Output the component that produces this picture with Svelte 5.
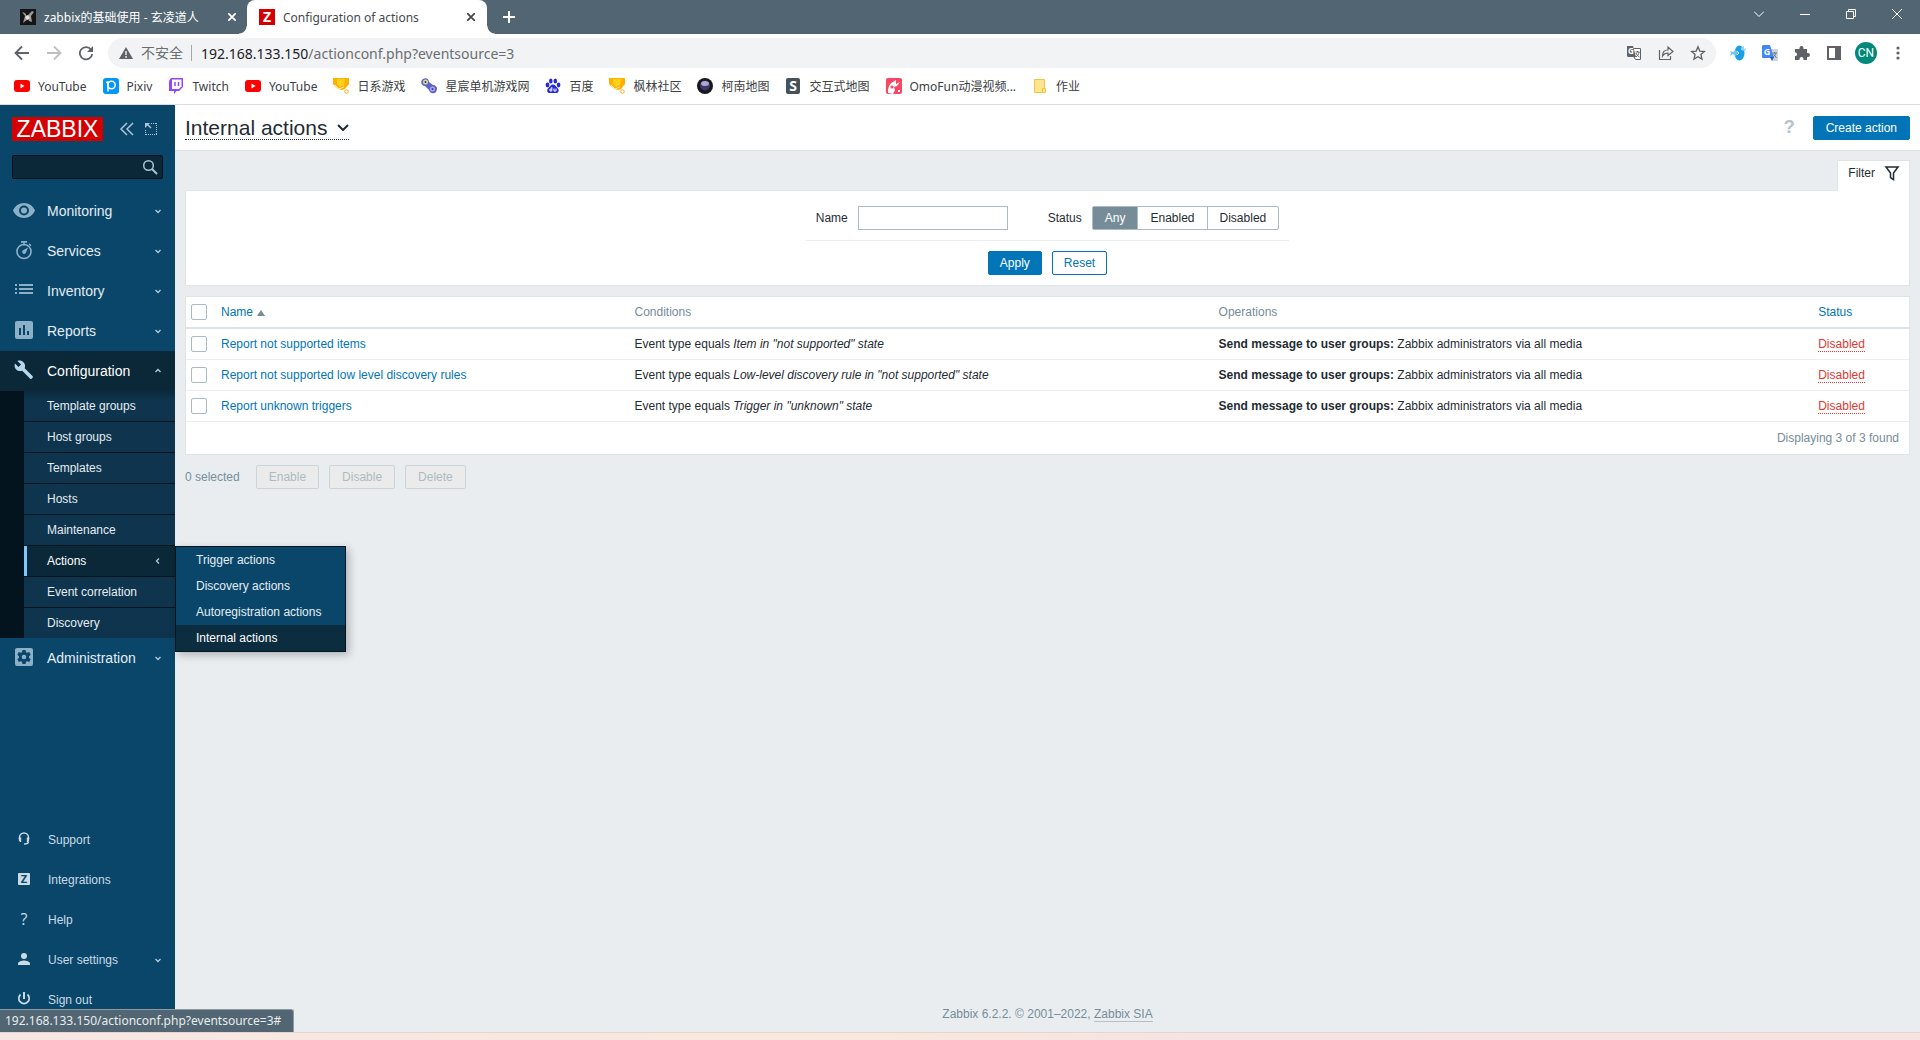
<script lang="ts">
	type Bookmark = { icon: string; label: string };
	type MenuItem = { icon: string; label: string };
	type ActionRow = { name: string; condition: string };

	const bookmarks: Bookmark[] = [
		{ icon: 'youtube', label: 'YouTube' },
		{ icon: 'pixiv', label: 'Pixiv' },
		{ icon: 'twitch', label: 'Twitch' },
		{ icon: 'youtube', label: 'YouTube' },
		{ icon: 'trophy', label: '日系游戏' },
		{ icon: 'gamepad', label: '星宸单机游戏网' },
		{ icon: 'paw', label: '百度' },
		{ icon: 'trophy', label: '枫林社区' },
		{ icon: 'orb', label: '柯南地图' },
		{ icon: 'smap', label: '交互式地图' },
		{ icon: 'omofun', label: 'OmoFun动漫视频...' },
		{ icon: 'folder', label: '作业' }
	];

	const topMenu: MenuItem[] = [
		{ icon: 'eye', label: 'Monitoring' },
		{ icon: 'watch', label: 'Services' },
		{ icon: 'list', label: 'Inventory' },
		{ icon: 'chart', label: 'Reports' },
		{ icon: 'wrench', label: 'Configuration' },
		{ icon: 'gear', label: 'Administration' }
	];

	const configItems = [
		'Template groups',
		'Host groups',
		'Templates',
		'Hosts',
		'Maintenance',
		'Actions',
		'Event correlation',
		'Discovery'
	];

	const actionItems = [
		'Trigger actions',
		'Discovery actions',
		'Autoregistration actions',
		'Internal actions'
	];

	const userMenu: MenuItem[] = [
		{ icon: 'headset', label: 'Support' },
		{ icon: 'zed', label: 'Integrations' },
		{ icon: 'help', label: 'Help' },
		{ icon: 'person', label: 'User settings' },
		{ icon: 'power', label: 'Sign out' }
	];

	const rows: ActionRow[] = [
		{ name: 'Report not supported items', condition: 'Item in "not supported" state' },
		{
			name: 'Report not supported low level discovery rules',
			condition: 'Low-level discovery rule in "not supported" state'
		},
		{ name: 'Report unknown triggers', condition: 'Trigger in "unknown" state' }
	];

	const statuses = ['Any', 'Enabled', 'Disabled'];

	let openSection = $state('Configuration');
	let search = $state('');
	let filterName = $state('');
	let filterStatus = $state('Any');
	let checked = $state([false, false, false]);

	let selectedCount = $derived(checked.filter(Boolean).length);

	function toggleSection(label: string) {
		openSection = openSection === label ? '' : label;
	}

	function toggleAll(event: Event) {
		const value = (event.target as HTMLInputElement).checked;
		checked = checked.map(() => value);
	}

	function resetFilter() {
		filterName = '';
		filterStatus = 'Any';
	}
</script>

{#snippet siteIcon(name: string)}
	<svg class="site-icon" width="16" height="16" viewBox="0 0 16 16" aria-hidden="true">
		{#if name === 'youtube'}
			<rect x="0" y="2" width="16" height="12" rx="3" fill="#f00" />
			<path d="M6.5 5.5v5l4-2.5z" fill="#fff" />
		{:else if name === 'pixiv'}
			<rect width="16" height="16" rx="3" fill="#0096fa" />
			<circle cx="8.5" cy="7" r="3.7" fill="none" stroke="#fff" stroke-width="1.5" />
			<path d="M3 4.5l2-.5v9.500" fill="none" stroke="#fff" stroke-width="1.5" />
		{:else if name === 'twitch'}
			<path d="M3 0h12v9l-4 4H8.500L6 16v-3H1V3z" fill="#9146ff" />
			<path d="M4 1.5h9.500v7L11 11H4z" fill="#fff" />
			<path d="M7 4v4M10.5 4v4" stroke="#9146ff" stroke-width="1.5" />
		{:else if name === 'trophy'}
			<path d="M0 0h16v6l-4 5-3 1-4-1-5-5z" fill="#ffb000" />
			<path d="M4 1h8l-1 6-4 2-3-3z" fill="#ffd21a" />
			<path d="M2 7l4 4 5-2" fill="none" stroke="#fff0c0" />
			<circle cx="13.5" cy="13.5" r="1.8" fill="#fff" stroke="#ffae1a" />
		{:else if name === 'gamepad'}
			<path d="M2 1c3-2 6 0 6 3l4 3c4 0 5 4 3 7-2 2-6 2-7-2L4 8C0 8-1 3 2 1z" fill="#5966c7" />
			<circle cx="4.5" cy="4" r="2.5" fill="#ded99a" />
			<circle cx="4.5" cy="4" r="1" fill="#36317e" />
			<circle cx="11.5" cy="11" r="2.5" fill="#b5a2e6" />
			<circle cx="11.5" cy="11" r="1" fill="#4b3290" />
		{:else if name === 'paw'}
			<g fill="#2529d8">
				<ellipse cx="2.5" cy="7" rx="1.9" ry="2.4" />
				<ellipse cx="5.8" cy="3" rx="1.8" ry="2.5" />
				<ellipse cx="10.3" cy="3" rx="1.8" ry="2.5" />
				<ellipse cx="13.6" cy="7" rx="1.8" ry="2.4" />
				<path d="M8 6.500c2 0 3 2 4.500 3.500C15 12.500 13 15.500 11 15H5c-2.500.5-4-3-1.500-5C5 8.500 6 6.500 8 6.500z" />
			</g>
			<path d="M6.800 9v4H5v-2h1.500M9 10.500V13h2v-2.500" fill="none" stroke="#fff" />
		{:else if name === 'orb'}
			<circle cx="8" cy="8" r="8" fill="#17171c" />
			<circle cx="8" cy="7.5" r="5" fill="#3c3968" />
			<ellipse cx="8" cy="5.500" rx="4" ry="2.5" fill="#aaa9d0" />
		{:else if name === 'smap'}
			<rect x="1" width="14" height="16" rx="2" fill="#46525a" />
			<text class="mark" x="8" y="13" font-size="14" fill="#fff">S</text>
		{:else if name === 'omofun'}
			<rect width="16" height="16" rx="2" fill="#fb4564" />
			<path d="M2 15c0-5 1-9 5-11l3-2v4l4-2-3 4-3 1 1 3-2 4zM11 4l3-2M12 12h2v2h-2z" fill="#fff" />
			<circle cx="6" cy="9" r="1.5" fill="#fb4564" />
		{:else if name === 'folder'}
			<path d="M2.500 1.500h10v9h1v4h-11z" fill="#ffe591" stroke="#f0c83c" />
			<path d="M10.500 14v-3.500h2" fill="none" stroke="#f0c83c" />
		{:else if name === 'avatar'}
			<rect width="16" height="16" fill="#151515" />
			<path d="M2 3l3 1 2 3 5-5 2 1-3 4 1 6-3-1-1-2-5 4 2-7z" fill="#9a9a9a" />
			<path d="M5 8l3-2 2 3-3 2z" fill="#e4e4e4" />
		{:else if name === 'zabbix'}
			<rect width="16" height="16" fill="#d40000" />
			<text class="mark" x="8" y="13" font-size="14" fill="#fff">Z</text>
		{/if}
	</svg>
{/snippet}

{#snippet menuIcon(name: string)}
	<svg class="menu-icon" width="24" height="24" viewBox="0 0 24 24" fill="currentColor" aria-hidden="true">
		{#if name === 'eye'}
			<path fill-rule="evenodd" d="M12 4C7 4 2.700 7.100 1 11.500 2.700 15.900 7 19 12 19s9.300-3.100 11-7.500C21.300 7.100 17 4 12 4zm0 12.500a5 5 0 1 1 0-10 5 5 0 0 1 0 10zm0-8a3 3 0 1 0 0 6 3 3 0 0 0 0-6z" />
		{:else if name === 'watch'}
			<circle cx="12" cy="12.5" r="7" fill="none" stroke="currentColor" stroke-width="1.600" />
			<path d="M9 2h6v1.700H9zM11.300 3.500h1.400v3h-1.400zM17.500 4.500l2 1.800-1 1-2-1.700zM16 8.500L13.800 14a2 2 0 1 1-3.200-2.400z" />
		{:else if name === 'list'}
			<path d="M3 5h2v2H3zM3 9h2v2H3zM3 13h2v2H3zM7 5h14v2H7zM7 9h14v2H7zM7 13h14v2H7z" />
		{:else if name === 'chart'}
			<path fill-rule="evenodd" d="M5 2h14a2 2 0 0 1 2 2v14a2 2 0 0 1-2 2H5a2 2 0 0 1-2-2V4c0-1.100.9-2 2-2zm2 7v7h2V9zm4-3v10h2V6zm4 6v4h2v-4z" />
		{:else if name === 'wrench'}
			<path d="M20.700 17.200l-8-8c.8-2 .4-4.400-1.300-6-1.500-1.500-4-2-6-1.200L9 5.500 6.500 8 3 4.500C2.200 6.500 2.600 9 4.200 10.500c1.600 1.600 4 2 6 1.200l8 8c.4.400 1 .4 1.400 0l1.100-1.100c.4-.4.4-1 0-1.400z" />
		{:else if name === 'gear'}
			<path fill-rule="evenodd" d="M5 2h14a2 2 0 0 1 2 2v14a2 2 0 0 1-2 2H5a2 2 0 0 1-2-2V4c0-1.100.9-2 2-2zm5.500 2L10 6.200l-1 .6-2.200-.7-1.500 2.600L7 10.200v1.600l-1.700 1.500 1.500 2.600 2.200-.7 1 .6.5 2.200h3l.5-2.200 1-.6 2.200.7 1.500-2.600-1.700-1.500v-1.600l1.700-1.500-1.500-2.600-2.200.7-1-.6-.5-2.200zM12 8.700a2.300 2.300 0 1 1 0 4.600 2.300 2.300 0 0 1 0-4.600z" />
		{:else if name === 'headset'}
			<path d="M7.500 11V9.500a4.500 4.500 0 0 1 9 0V11" fill="none" stroke="currentColor" stroke-width="1.500" />
			<path d="M6.800 9.500h2.400V14H8l-1.200-1.500zM14.800 9.500h2.400v3L16 14h-1.200z" />
			<path d="M16.500 13.500c0 2-1.500 2.500-4.500 2.500" fill="none" stroke="currentColor" stroke-width="1.500" />
		{:else if name === 'zed'}
			<rect x="6" y="5" width="12" height="12" rx="1" />
			<text class="mark" x="12" y="15" font-size="11" fill="#0a466a">Z</text>
		{:else if name === 'help'}
			<text class="mark thin" x="12" y="17" font-size="16">?</text>
		{:else if name === 'person'}
			<circle cx="12" cy="8" r="3" />
			<path d="M6 17v-1.500c0-2 4-3 6-3s6 1 6 3V17z" />
		{:else if name === 'power'}
			<path d="M8.500 6.500a5.200 5.200 0 1 0 7 0" fill="none" stroke="currentColor" stroke-width="1.700" />
			<rect x="11" y="4" width="2" height="7" />
		{/if}
	</svg>
{/snippet}

{#snippet chevron(direction: string)}
	<svg class="chevron {direction}" width="8" height="8" viewBox="0 0 8 8" aria-hidden="true">
		<path d="M1.500 3L4 5.500 6.500 3" fill="none" stroke="currentColor" stroke-width="1.300" />
	</svg>
{/snippet}

<div class="screen">
	<div class="tab-strip">
		<div class="tab">
			{@render siteIcon('avatar')}
			<span class="tab-title">zabbix的基础使用 - 玄凌道人</span>
			<button class="tab-close" type="button" aria-label="Close tab">
				<svg width="8" height="8" viewBox="0 0 8 8"><path d="M0 0l8 8M8 0L0 8" stroke="currentColor" stroke-width="1.800" /></svg>
			</button>
		</div>
		<div class="tab active">
			{@render siteIcon('zabbix')}
			<span class="tab-title">Configuration of actions</span>
			<button class="tab-close" type="button" aria-label="Close tab">
				<svg width="8" height="8" viewBox="0 0 8 8"><path d="M0 0l8 8M8 0L0 8" stroke="currentColor" stroke-width="1.800" /></svg>
			</button>
		</div>
		<button class="new-tab" type="button" aria-label="New tab">
			<svg width="12" height="12" viewBox="0 0 12 12"><path d="M6 0v12M0 6h12" stroke="currentColor" stroke-width="2" /></svg>
		</button>
		<div class="window-buttons">
			<button type="button" aria-label="Search tabs">
				<svg width="10" height="10" viewBox="0 0 10 10"><path d="M0 2.500l5 5 5-5" /></svg>
			</button>
			<button type="button" aria-label="Minimize">
				<svg width="10" height="10" viewBox="0 0 10 10"><path d="M0 5.500h10" /></svg>
			</button>
			<button type="button" aria-label="Restore">
				<svg width="10" height="10" viewBox="0 0 10 10"><path d="M.5 2.500h7v7h-7zM2.500 2V.5h7v7H8" /></svg>
			</button>
			<button type="button" aria-label="Close window">
				<svg width="10" height="10" viewBox="0 0 10 10"><path d="M0 0l10 10M10 0L0 10" /></svg>
			</button>
		</div>
	</div>

	<div class="toolbar">
		<div class="nav-buttons">
			<button type="button" aria-label="Back">
				<svg width="16" height="16" viewBox="0 0 16 16"><path d="M15 8H2M8 1.500L1.500 8 8 14.500" fill="none" stroke="#5f6368" stroke-width="1.800" /></svg>
			</button>
			<button type="button" aria-label="Forward">
				<svg width="16" height="16" viewBox="0 0 16 16"><path d="M1 8h13M8 1.500L14.500 8 8 14.500" fill="none" stroke="#bdbfc1" stroke-width="1.800" /></svg>
			</button>
			<button type="button" aria-label="Reload">
				<svg width="16" height="16" viewBox="0 0 16 16"><path d="M13 4.500A6.200 6.200 0 1 0 14.200 9" fill="none" stroke="#5f6368" stroke-width="1.800" /><path d="M15 1v6H9z" fill="#5f6368" /></svg>
			</button>
		</div>
		<div class="address">
			<svg width="14" height="14" viewBox="0 0 14 14" aria-hidden="true"><path d="M7 1l7 12H0z" fill="#5f6368" /><path d="M7 5v4M7 10v2" stroke="#f1f3f4" stroke-width="1.400" /></svg>
			<span class="insecure">不安全</span>
			<span class="url"><b>192.168.133.150</b>/actionconf.php?eventsource=3</span>
			<div class="address-icons">
				<button type="button" aria-label="Translate this page">
					<svg width="16" height="16" viewBox="0 0 16 16"><path d="M7.500 3.500h7v11H9.500L8 12" fill="#fff" stroke="#5f6368" /><path d="M1 1h6l3 11H2.500A1.500 1.500 0 0 1 1 10.500z" fill="#5f6368" /><text class="mark" x="4.800" y="9" font-size="8" fill="#fff">G</text><path d="M9.500 7h4M11.500 6v1M13 7c0 2-1.500 4-3 5M10 8c.5 2 2 3 3.500 4" fill="none" stroke="#5f6368" /></svg>
				</button>
				<button type="button" aria-label="Share">
					<svg width="16" height="16" viewBox="0 0 16 16"><path d="M1.500 5v9.500h11V11M4.500 11c0-4 2-6 5.500-6V2l5 4.500-5 4V8c-2.500 0-4 .5-5.500 3z" fill="none" stroke="#5f6368" stroke-width="1.200" /></svg>
				</button>
				<button type="button" aria-label="Bookmark this tab">
					<svg width="16" height="16" viewBox="0 0 16 16"><path d="M8 1.800l1.800 4.300 4.600.4-3.500 3 1.100 4.600L8 11.700l-4 2.400 1.100-4.600-3.500-3 4.600-.4z" fill="none" stroke="#5f6368" stroke-width="1.300" /></svg>
				</button>
			</div>
		</div>
		<div class="extensions">
			<button type="button" aria-label="Fish extension">
				<svg width="16" height="16" viewBox="0 0 16 16"><ellipse cx="9.500" cy="8" rx="5" ry="7.500" fill="#1b9fe8" /><path d="M0 6l3 1 3-2 2 3-2 3-3-2-3 2 1-3z" fill="#70c6f2" /><path d="M7 6l2 2-2 2" fill="none" stroke="#d8f1fd" /><path d="M11 1l1 2 2-2v3l2-1-1 3-4-1z" fill="#8ed6f7" /></svg>
			</button>
			<button type="button" aria-label="Google Translate">
				<svg width="16" height="16" viewBox="0 0 16 16"><path d="M6 4h10v12H10z" fill="#d2d5da" /><path d="M1 0h7l4 13H1a1 1 0 0 1-1-1V1z" fill="#4285f4" /><path d="M8 12h4l-2 4z" fill="#2457c5" /><text class="mark" x="5" y="10" font-size="9" fill="#fff">G</text><path d="M10.500 8H15M12.500 7v1M14 8c-.5 2-1.500 3-3 4M11.500 9l3 4" fill="none" stroke="#607d8b" /></svg>
			</button>
			<button type="button" aria-label="Extensions">
				<svg width="16" height="16" viewBox="0 0 16 16"><path d="M1 4h4.500V3a2 2 0 0 1 4 0v1H13v4h1a2 2 0 0 1 0 4h-1v3H9.500v-1a2 2 0 0 0-4 0v1H1v-4h1a2 2 0 0 0 0-3.500H1z" fill="#5f6368" /></svg>
			</button>
			<button type="button" aria-label="Side panel">
				<svg width="16" height="16" viewBox="0 0 16 16"><path fill-rule="evenodd" d="M1 1h14v14H1zm2 2v10h6V3z" fill="#5f6368" /></svg>
			</button>
			<button class="profile" type="button" aria-label="Profile">CN</button>
			<button type="button" aria-label="Menu">
				<svg width="16" height="16" viewBox="0 0 16 16" fill="#5f6368"><circle cx="8" cy="3" r="1.600" /><circle cx="8" cy="8" r="1.600" /><circle cx="8" cy="13" r="1.600" /></svg>
			</button>
		</div>
	</div>

	<nav class="bookmarks" aria-label="Bookmarks">
		{#each bookmarks as bookmark}
			<a href="#bookmark">{@render siteIcon(bookmark.icon)}<span>{bookmark.label}</span></a>
		{/each}
	</nav>

	<div class="page">
		<aside class="sidebar">
			<div class="brand">
				<a class="logo" href="#dashboard">ZABBIX</a>
				<button type="button" aria-label="Collapse sidebar">
					<svg width="16" height="16" viewBox="0 0 16 16"><path d="M8 2L2 8l6 6M14 2L8 8l6 6" fill="none" stroke="currentColor" stroke-width="1.500" /></svg>
				</button>
				<button type="button" aria-label="Hide sidebar">
					<svg width="16" height="16" viewBox="0 0 16 16"><path d="M8 2.500h6M13.500 2v12M14 13.500H2M2.500 14V8" fill="none" stroke="currentColor" stroke-dasharray="1 1" /><path d="M2 2h5L5.500 3.500l3 3-1 1-3-3L2 7z" fill="currentColor" /></svg>
				</button>
			</div>

			<form class="search" role="search" onsubmit={(event) => event.preventDefault()}>
				<input type="text" aria-label="Search" bind:value={search} />
				<button type="submit" aria-label="Search">
					<svg width="16" height="16" viewBox="0 0 16 16"><circle cx="6.500" cy="6.500" r="4.800" fill="none" stroke="currentColor" stroke-width="1.500" /><path d="M10 10l5 5" stroke="currentColor" stroke-width="2" /></svg>
				</button>
			</form>

			<nav class="menu" aria-label="Main navigation">
				{#each topMenu as item}
					{@const open = openSection === item.label}
					<button class="menu-item" class:open type="button" aria-expanded={open} onclick={() => toggleSection(item.label)}>
						{@render menuIcon(item.icon)}
						<span>{item.label}</span>
						{@render chevron(open ? 'up' : 'down')}
					</button>
					{#if open && item.label === 'Configuration'}
						<ul class="submenu">
							{#each configItems as label}
								<li class:selected={label === 'Actions'}>
									<a href="#config">{label}</a>
									{#if label === 'Actions'}
										{@render chevron('left')}
										<ul class="flyout">
											{#each actionItems as action}
												<li><a class:current={action === 'Internal actions'} href="#actions">{action}</a></li>
											{/each}
										</ul>
									{/if}
								</li>
							{/each}
						</ul>
					{/if}
				{/each}
			</nav>

			<nav class="user-menu" aria-label="User navigation">
				{#each userMenu as item}
					<a href="#user">
						{@render menuIcon(item.icon)}
						<span>{item.label}</span>
						{#if item.label === 'User settings'}
							{@render chevron('down')}
						{/if}
					</a>
				{/each}
			</nav>
		</aside>

		<main>
			<header class="page-header">
				<h1>
					<button type="button">
						Internal actions
						<svg width="12" height="8" viewBox="0 0 12 8" aria-hidden="true"><path d="M1 2l5 5 5-5" fill="none" stroke="currentColor" stroke-width="2" /></svg>
					</button>
				</h1>
				<a class="page-help" href="#help" aria-label="Help">?</a>
				<button class="btn" type="button">Create action</button>
			</header>

			<div class="content">
				<div class="filter-tab">
					<button type="button">
						Filter
						<svg width="16" height="16" viewBox="0 0 16 16" aria-hidden="true"><path d="M2 2h12l-4.500 6v6.500l-3-2V8z" fill="none" stroke="currentColor" stroke-width="1.500" /></svg>
					</button>
				</div>

				<form class="filter" onsubmit={(event) => event.preventDefault()}>
					<div class="filter-fields">
						<label for="filter-name">Name</label>
						<input id="filter-name" type="text" bind:value={filterName} />
						<span id="status-label">Status</span>
						<div class="segmented" role="radiogroup" aria-labelledby="status-label">
							{#each statuses as status}
								<label>
									<input type="radio" name="status" value={status} bind:group={filterStatus} />
									<span>{status}</span>
								</label>
							{/each}
						</div>
					</div>
					<div class="filter-actions">
						<button class="btn" type="submit">Apply</button>
						<button class="btn alt" type="button" onclick={resetFilter}>Reset</button>
					</div>
				</form>

				<table>
					<thead>
						<tr>
							<th class="check"><input type="checkbox" aria-label="Select all" onchange={toggleAll} /></th>
							<th class="name"><a href="#sort">Name<span class="sort-arrow"></span></a></th>
							<th class="conditions">Conditions</th>
							<th class="operations">Operations</th>
							<th><a href="#sort">Status</a></th>
						</tr>
					</thead>
					<tbody>
						{#each rows as row, i}
							<tr>
								<td><input type="checkbox" aria-label={row.name} bind:checked={checked[i]} /></td>
								<td><a href="#edit">{row.name}</a></td>
								<td>Event type equals <em>{row.condition}</em></td>
								<td><b>Send message to user groups:</b> Zabbix administrators via all media</td>
								<td><a class="disabled" href="#enable">Disabled</a></td>
							</tr>
						{/each}
					</tbody>
					<tfoot>
						<tr><td colspan="5">Displaying 3 of 3 found</td></tr>
					</tfoot>
				</table>

				<div class="bulk">
					<span>{selectedCount} selected</span>
					<button type="button" disabled={selectedCount === 0}>Enable</button>
					<button type="button" disabled={selectedCount === 0}>Disable</button>
					<button type="button" disabled={selectedCount === 0}>Delete</button>
				</div>
			</div>

			<footer>Zabbix 6.2.2. © 2001–2022, <a href="#zabbix">Zabbix SIA</a></footer>
		</main>

		<div class="link-status">192.168.133.150/actionconf.php?eventsource=3#</div>
	</div>

	<div class="desktop-edge"></div>
</div>

<style>
	:global(body) {
		margin: 0;
	}

	.screen {
		--chrome: #516672;
		--blue: #0275b8;
		--line: #dfe4e7;
		min-height: 100vh;
		display: flex;
		flex-direction: column;
		font-family: 'Liberation Sans', Arial, sans-serif;
		font-size: 12px;
		color: #1f2c33;
		background: #fff;
	}

	.screen *,
	.screen *::before,
	.screen *::after {
		box-sizing: border-box;
	}

	button {
		font: inherit;
		color: inherit;
		background: none;
		border: 0;
		padding: 0;
		cursor: pointer;
	}

	a {
		text-decoration: none;
		color: var(--blue);
	}

	svg {
		display: block;
		flex: none;
	}

	.mark {
		font-family: 'Open Sans', sans-serif;
		font-weight: 700;
		text-anchor: middle;
	}

	.mark.thin {
		font-weight: 400;
	}

	ul {
		list-style: none;
		margin: 0;
		padding: 0;
	}

	/* Browser window */
	.tab-strip,
	.toolbar,
	.bookmarks,
	.link-status {
		font-family: 'Noto Sans', 'Noto Sans CJK SC', sans-serif;
	}

	.tab-strip {
		display: flex;
		height: 34px;
		background: var(--chrome);
		color: #fff;
	}

	.tab {
		position: relative;
		display: flex;
		align-items: center;
		gap: 8px;
		width: 247px;
		padding: 0 11px 6px 20px;
		padding-bottom: 0;
		white-space: nowrap;
	}

	.tab.active {
		width: 240px;
		padding: 0 12px;
		border-radius: 8px 8px 0 0;
		background: #fff;
		color: #45494d;
	}

	/* Flared feet of the active tab */
	.tab.active::before,
	.tab.active::after {
		content: '';
		position: absolute;
		bottom: 0;
		width: 8px;
		height: 8px;
	}

	.tab.active::before {
		right: 100%;
		background: radial-gradient(circle at 0 0, var(--chrome) 7px, #fff 8px);
	}

	.tab.active::after {
		left: 100%;
		background: radial-gradient(circle at 100% 0, var(--chrome) 7px, #fff 8px);
	}

	.tab-title {
		flex: 1;
	}

	.new-tab {
		padding: 0 16px;
	}

	.window-buttons {
		display: flex;
		margin-left: auto;
	}

	.window-buttons button {
		display: grid;
		place-items: center;
		width: 46px;
		height: 28px;
	}

	.window-buttons path {
		fill: none;
		stroke: #fff;
	}

	.toolbar {
		display: flex;
		align-items: center;
		height: 38px;
		padding-left: 14px;
	}

	.nav-buttons {
		display: flex;
		gap: 16px;
		width: 94px;
	}

	.address {
		display: flex;
		align-items: center;
		flex: 1;
		height: 30px;
		padding: 0 10px 0 11px;
		border-radius: 15px;
		background: #f1f3f4;
		font-size: 14px;
		color: #6b6f73;
	}

	.insecure {
		margin-left: 8px;
		padding-right: 8px;
		border-right: 1px solid #a5a8ab;
		line-height: 16px;
	}

	.url {
		flex: 1;
		margin-left: 9px;
	}

	.url b {
		font-weight: 400;
		color: #202124;
	}

	.address-icons {
		display: flex;
		gap: 16px;
	}

	.extensions {
		display: flex;
		align-items: center;
		gap: 16px;
		padding: 0 14px;
	}

	.profile {
		width: 22px;
		height: 22px;
		margin: 0 -3px;
		border-radius: 50%;
		background: #00897b;
		color: #fff;
		font: 12px Roboto, sans-serif;
	}

	.bookmarks {
		display: flex;
		gap: 16px;
		height: 33px;
		padding: 0 14px;
		border-bottom: 1px solid #dadcde;
	}

	.bookmarks a {
		display: flex;
		align-items: center;
		gap: 8px;
		padding-bottom: 4px;
		color: #3c4043;
		white-space: nowrap;
	}

	/* Sidebar */
	.page {
		position: relative;
		flex: 1;
		display: flex;
		background: #e9edf0;
	}

	.sidebar {
		display: flex;
		flex-direction: column;
		flex: none;
		width: 175px;
		background: #0a466a;
		color: #e3edf3;
	}

	.brand {
		display: flex;
		align-items: center;
		padding: 12px 12px 0;
		color: #a9c5d7;
	}

	.logo {
		width: 91px;
		background: #d40000;
		color: #fff;
		font-size: 23px;
		line-height: 24px;
		text-align: center;
	}

	.brand button:first-of-type {
		margin: 0 8px 0 16px;
	}

	.search {
		display: flex;
		align-items: center;
		height: 24px;
		margin: 14px 12px 12px;
		border: 1px solid #05111a;
		border-radius: 2px;
		background: #0a2838;
		color: #a9c5d7;
	}

	.search input {
		flex: 1;
		min-width: 0;
		padding: 0 4px;
		border: 0;
		background: none;
		color: #fff;
		font: inherit;
	}

	.search button {
		padding: 0 4px;
	}

	.menu-item {
		display: flex;
		align-items: center;
		width: 100%;
		height: 40px;
		padding: 0 13px 0 12px;
		font-size: 14px;
		text-align: left;
	}

	.menu-item span {
		flex: 1;
		margin-left: 11px;
	}

	.menu-item .menu-icon {
		color: #8cb0c8;
	}

	.menu-item.open {
		background: #0a2838;
		color: #fff;
	}

	.menu-item.open .menu-icon {
		color: #b5d8ee;
	}

	.chevron {
		color: #b5cbd9;
	}

	.chevron.up {
		transform: rotate(180deg);
	}

	.chevron.left {
		transform: rotate(90deg);
	}

	.submenu {
		border-left: 24px solid #04141e;
		background: #0f344d;
	}

	.submenu > li {
		position: relative;
		display: flex;
		align-items: center;
		height: 31px;
		padding-right: 13px;
		border-bottom: 1px solid #05151f;
	}

	.submenu > li:first-child {
		background: linear-gradient(#0b293c, #0f344d 8px);
	}

	.submenu > li:last-child {
		height: 30px;
		border-bottom: 0;
	}

	.submenu > li > a {
		flex: 1;
		padding-left: 23px;
		color: #e3edf3;
	}

	.submenu > li.selected {
		background: #0a2838;
	}

	.submenu > li.selected > a {
		padding-left: 20px;
		border-left: 3px solid #7dc8ff;
		line-height: 30px;
		color: #fff;
	}

	.flyout {
		position: absolute;
		z-index: 2;
		top: 0;
		left: 100%;
		width: 171px;
		border: 1px solid #05151f;
		background: #0a466a;
		box-shadow: 3px 3px 8px rgba(0, 0, 0, 0.25);
	}

	.flyout a {
		display: block;
		padding: 0 20px;
		line-height: 26px;
		color: #e3edf3;
		white-space: nowrap;
	}

	.flyout a.current {
		background: #0c2c40;
		color: #fff;
	}

	.user-menu {
		margin-top: auto;
		padding-bottom: 12px;
	}

	.user-menu a {
		display: flex;
		align-items: center;
		height: 40px;
		padding: 0 13px 0 12px;
		color: #c9dbe6;
	}

	.user-menu span {
		flex: 1;
		margin-left: 12px;
	}

	/* Content */
	main {
		display: flex;
		flex-direction: column;
		flex: 1;
		min-width: 0;
	}

	.page-header {
		display: flex;
		align-items: center;
		height: 46px;
		padding: 0 10px;
		border-bottom: 1px solid var(--line);
		background: #fff;
	}

	h1 {
		flex: 1;
		margin: 0;
		font-size: 21px;
		font-weight: 400;
	}

	h1 button {
		display: inline-flex;
		align-items: center;
		gap: 10px;
		border-bottom: 1px dotted #1f2c33;
		line-height: 23px;
	}

	.page-help {
		margin-right: 18px;
		font-size: 18px;
		font-weight: 700;
		color: #b4c1c9;
	}

	.btn {
		height: 24px;
		padding: 0 12px;
		border: 1px solid var(--blue);
		border-radius: 2px;
		background: var(--blue);
		color: #fff;
	}

	.filter-actions .btn {
		padding: 0 11px;
	}

	.btn.alt {
		background: #fff;
		color: var(--blue);
	}

	.content {
		padding: 9px 10px 0;
	}

	.filter-tab {
		display: flex;
		justify-content: flex-end;
	}

	.filter-tab button {
		position: relative;
		z-index: 1;
		display: flex;
		align-items: center;
		gap: 9px;
		height: 31px;
		margin-bottom: -1px;
		padding: 0 9px 6px 10px;
		border: 1px solid var(--line);
		border-bottom: 0;
		background: #fff;
	}

	.filter {
		display: flex;
		flex-direction: column;
		align-items: center;
		padding: 15px 0 10px;
		border: 1px solid var(--line);
		background: #fff;
	}

	.filter-fields {
		display: flex;
		align-items: center;
		padding: 0 10px 10px;
		border-bottom: 1px solid #ebeef0;
	}

	.filter-fields > input {
		width: 150px;
		height: 24px;
		margin: 0 40px 0 10px;
		padding: 0 4px;
		border: 1px solid #acbbc2;
		font: inherit;
	}

	.segmented {
		display: flex;
		margin-left: 10px;
		border: 1px solid #acbbc2;
		border-radius: 2px;
	}

	.segmented label {
		position: relative;
		line-height: 22px;
	}

	.segmented label + label {
		border-left: 1px solid #acbbc2;
	}

	.segmented input {
		position: absolute;
		inset: 0;
		margin: 0;
		opacity: 0;
	}

	.segmented span {
		display: block;
		padding: 0 12px;
	}

	.segmented input:checked + span {
		background: #768d99;
		color: #fff;
	}

	.filter-actions {
		display: flex;
		gap: 10px;
		padding-top: 10px;
	}

	table {
		width: 100%;
		margin-top: 10px;
		border: 1px solid var(--line);
		border-collapse: separate;
		border-spacing: 0;
		table-layout: fixed;
		background: #fff;
	}

	th,
	td {
		height: 31px;
		padding: 0 5px;
		border-bottom: 1px solid #ebeef0;
		font-weight: 400;
		text-align: left;
	}

	th {
		height: 32px;
		border-bottom: 2px solid #dce2e5;
		color: #768d99;
	}

	.check {
		width: 30px;
	}

	.name {
		width: 24%;
	}

	.conditions {
		width: 33.9%;
	}

	.operations {
		width: 34.8%;
	}

	.sort-arrow {
		display: inline-block;
		margin-left: 4px;
		border: 4px solid transparent;
		border-top: 0;
		border-bottom: 6px solid #768d99;
	}

	input[type='checkbox'] {
		appearance: none;
		display: block;
		width: 16px;
		height: 16px;
		margin: 0;
		border: 1px solid #acbbc2;
		border-radius: 2px;
		background: #fff;
	}

	input[type='checkbox']:checked {
		background: var(--blue);
	}

	.disabled {
		border-bottom: 1px dotted #e33734;
		color: #e33734;
	}

	tfoot td {
		height: 32px;
		padding-right: 10px;
		border: 0;
		text-align: right;
		color: #768d99;
	}

	.bulk {
		display: flex;
		align-items: center;
		gap: 10px;
		padding-top: 10px;
		color: #768d99;
	}

	.bulk span {
		margin-right: 6px;
	}

	.bulk button {
		height: 24px;
		padding: 0 12px;
		border: 1px solid #ccd5d9;
		border-radius: 2px;
		background: #ebebeb;
		color: var(--blue);
	}

	.bulk button:disabled {
		color: #acbbc2;
	}

	footer {
		margin-top: auto;
		padding-bottom: 11px;
		text-align: center;
		color: #768d99;
	}

	footer a {
		border-bottom: 1px solid #b4c1c9;
		color: #768d99;
	}

	.link-status {
		position: absolute;
		z-index: 3;
		bottom: 0;
		left: 0;
		padding: 0 12px 0 5px;
		border-top: 1px solid #8b9aa3;
		border-right: 1px solid #8b9aa3;
		border-radius: 0 3px 0 0;
		background: var(--chrome);
		color: #e8ecee;
		line-height: 22px;
	}

	.desktop-edge {
		height: 8px;
		border-top: 1px solid #e5d6d2;
		background: linear-gradient(90deg, #f8e6e4, #f9e8dc 45%, #f5e2e3 65%, #f7e2df);
	}
</style>
